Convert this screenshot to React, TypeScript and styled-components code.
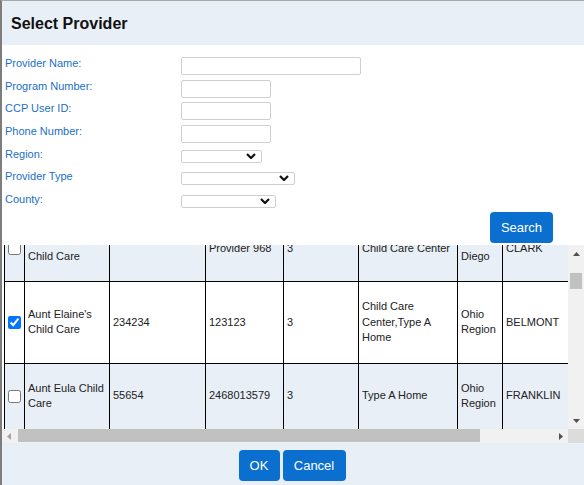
import React, { useLayoutEffect, useRef } from "react";
import styled, { createGlobalStyle } from "styled-components";

const GlobalStyle = createGlobalStyle`
  html, body {
    margin: 0;
    padding: 0;
    background: #fff;
  }
  body {
    font-family: "Liberation Sans", Arial, sans-serif;
  }
`;

const Dialog = styled.div`
  width: 584px;
  height: 485px;
  box-sizing: border-box;
  border-left: 2px solid #7d7d7d;
  border-top: 1px solid #a8a8a8;
  display: flex;
  flex-direction: column;
  overflow: hidden;
`;

const TitleBar = styled.div`
  height: 44px;
  flex: none;
  background: #e9eff6;
  display: flex;
  align-items: center;
  padding-left: 9px;
`;

const Title = styled.h1`
  margin: 0;
  font-size: 16px;
  font-weight: bold;
  color: #111;
  padding-top: 1px;
`;

const FormSection = styled.div`
  height: 200px;
  flex: none;
  box-sizing: border-box;
  padding: 12px 0 2px 3px;
  display: flex;
  flex-direction: column;
`;

const FormGrid = styled.div`
  display: grid;
  grid-template-columns: 176px 1fr;
  grid-template-rows: repeat(6, 22.67px) 19px;
`;

const Label = styled.label`
  font-size: 11px;
  line-height: 13px;
  color: #1c6fc6;
`;

const TextInput = styled.input<{ $w: number }>`
  width: ${(p) => p.$w}px;
  height: 18px;
  box-sizing: border-box;
  border: 1px solid #cfcfcf;
  border-radius: 2px;
  padding: 0 3px;
  font-size: 11px;
  font-family: inherit;
  outline: none;
`;

const SelectWrap = styled.span<{ $w: number }>`
  position: relative;
  display: block;
  width: ${(p) => p.$w}px;
  height: 13px;
  margin-top: 2px;
`;

const Select = styled.select`
  appearance: none;
  display: block;
  width: 100%;
  height: 100%;
  box-sizing: border-box;
  border: 1px solid #cfcfcf;
  border-radius: 2px;
  background: #fff;
  padding: 0;
  margin: 0;
  font-size: 10px;
  outline: none;
`;

const Chevron = styled.svg`
  position: absolute;
  right: 6px;
  top: 3px;
  pointer-events: none;
`;

const SearchRow = styled.div`
  display: flex;
  justify-content: flex-end;
  padding-right: 31px;
`;

const BlueButton = styled.button<{ $w: number }>`
  width: ${(p) => p.$w}px;
  height: 31px;
  border: none;
  border-radius: 4px;
  background: #0b6fcf;
  color: #fff;
  font-family: "Liberation Sans", Arial, sans-serif;
  font-size: 13px;
  padding: 0;
  cursor: pointer;
`;

/* table area: viewport plus hand drawn scrollbars */
const TableFrame = styled.div`
  flex: none;
  display: grid;
  grid-template-columns: 1fr 16px;
  grid-template-rows: 184px 14px;
`;

const Viewport = styled.div`
  overflow: hidden;
  background: #fff;
  padding-left: 2px;
`;

const VBar = styled.div`
  background: #f1f1f1;
  display: flex;
  flex-direction: column;
`;

const HBar = styled.div`
  background: #f1f1f1;
  display: flex;
`;

const BarButton = styled.div<{ $vertical?: boolean }>`
  flex: none;
  width: ${(p) => (p.$vertical ? "16px" : "14px")};
  height: ${(p) => (p.$vertical ? "17px" : "14px")};
  display: flex;
  align-items: center;
  justify-content: center;
`;

const Track = styled.div`
  flex: 1;
  display: flex;
`;

const VThumb = styled.div<{ $offset: number; $size: number }>`
  width: 12px;
  height: ${(p) => p.$size}px;
  margin: ${(p) => p.$offset}px 0 0 2px;
  background: #c1c1c1;
`;

const HThumb = styled.div<{ $offset: number; $size: number }>`
  width: ${(p) => p.$size}px;
  height: 13px;
  margin-left: ${(p) => p.$offset}px;
  background: #c1c1c1;
`;

const Corner = styled.div`
  background: #dcdcdc;
`;

const Table = styled.table`
  border-collapse: collapse;
  table-layout: fixed;
  width: 668px;
  font-size: 11px;
  line-height: 15.5px;
  color: #222;
`;

const HeadCell = styled.th`
  border: 1px solid #000;
  padding: 6px 3px;
  text-align: left;
  font-weight: bold;
  background: #dfe7f1;
  vertical-align: middle;
`;

const Row = styled.tr<{ $striped: boolean }>`
  background: ${(p) => (p.$striped ? "#e9eff7" : "#fff")};
`;

const Cell = styled.td`
  border: 1px solid #000;
  padding: 17px 3px;
  vertical-align: middle;
  word-wrap: break-word;
`;

const CheckCell = styled(Cell)`
  padding: 0 0 0 3px;
`;

const Check = styled.input`
  width: 13px;
  height: 13px;
  margin: 0;
  display: block;
`;

const Footer = styled.div`
  flex: 1;
  background: #e9eff6;
  display: flex;
  justify-content: center;
  align-items: flex-start;
  gap: 3px;
  padding: 7px 2px 0 0;
`;

type Provider = {
  name: string;
  program: string;
  user: string;
  rating: string;
  type: string;
  region: string;
  county: string;
  phone: string;
  checked?: boolean;
  anchor?: boolean;
};

const providers: Provider[] = [
  { name: "A Child's Place", program: "100245", user: "Provider 112", rating: "2", type: "Child Care Center", region: "Ohio Region", county: "ADAMS", phone: "6145550101" },
  { name: "ABC Learning Center", program: "100871", user: "Provider 540", rating: "4", type: "Type B Home", region: "Ohio Region", county: "ALLEN", phone: "6145550188" },
  { name: "Aunt Bettie's Child Care", program: "", user: "Provider 968", rating: "3", type: "Child Care Center", region: "San Diego", county: "CLARK", phone: "9375550142" },
  { name: "Aunt Elaine's Child Care", program: "234234", user: "123123", rating: "3", type: "Child Care Center,Type A Home", region: "Ohio Region", county: "BELMONT", phone: "7405550123", checked: true, anchor: true },
  { name: "Aunt Eula Child Care", program: "55654", user: "2468013579", rating: "3", type: "Type A Home", region: "Ohio Region", county: "FRANKLIN", phone: "6145550177" },
  { name: "Bright Beginnings", program: "301122", user: "Provider 204", rating: "5", type: "Child Care Center", region: "Ohio Region", county: "BUTLER", phone: "5135550190" },
  { name: "Busy Bees Day Care", program: "301877", user: "Provider 311", rating: "2", type: "Type B Home", region: "Ohio Region", county: "CLERMONT", phone: "5135550111" },
  { name: "Caring Hearts Child Care", program: "302440", user: "Provider 417", rating: "3", type: "Type A Home", region: "Ohio Region", county: "CUYAHOGA", phone: "2165550136" },
  { name: "Children's Corner", program: "303016", user: "Provider 529", rating: "4", type: "Child Care Center", region: "Ohio Region", county: "DELAWARE", phone: "7405550165" },
  { name: "Cozy Kids Learning", program: "303558", user: "Provider 630", rating: "1", type: "Type B Home", region: "Ohio Region", county: "ERIE", phone: "4195550148" },
  { name: "Discovery Child Care", program: "304102", user: "Provider 741", rating: "3", type: "Child Care Center", region: "Ohio Region", county: "FAIRFIELD", phone: "7405550109" },
  { name: "First Steps Academy", program: "304719", user: "Provider 852", rating: "5", type: "Child Care Center", region: "Ohio Region", county: "GREENE", phone: "9375550155" },
  { name: "Giggles Day Care", program: "305233", user: "Provider 963", rating: "2", type: "Type A Home", region: "Ohio Region", county: "HAMILTON", phone: "5135550172" },
  { name: "Happy Days Child Care", program: "305880", user: "Provider 174", rating: "3", type: "Child Care Center", region: "Ohio Region", county: "LAKE", phone: "4405550127" },
  { name: "Kiddie Kingdom", program: "306411", user: "Provider 285", rating: "4", type: "Type B Home", region: "Ohio Region", county: "LICKING", phone: "7405550193" },
  { name: "Little Acorns Child Care", program: "306990", user: "Provider 396", rating: "3", type: "Child Care Center", region: "Ohio Region", county: "LORAIN", phone: "4405550114" },
  { name: "Little Lambs Learning", program: "307524", user: "Provider 407", rating: "2", type: "Type A Home", region: "Ohio Region", county: "LUCAS", phone: "4195550160" },
  { name: "Rainbow Kids Care", program: "308163", user: "Provider 518", rating: "5", type: "Child Care Center", region: "Ohio Region", county: "MONTGOMERY", phone: "9375550181" },
  { name: "Sunshine Child Care", program: "308702", user: "Provider 629", rating: "3", type: "Type B Home", region: "Ohio Region", county: "PORTAGE", phone: "3305550139" },
  { name: "Tiny Tots Center", program: "309345", user: "Provider 730", rating: "4", type: "Child Care Center", region: "Ohio Region", county: "STARK", phone: "3305550152" },
  { name: "Wee Care Child Care", program: "309876", user: "Provider 841", rating: "3", type: "Type A Home", region: "Ohio Region", county: "SUMMIT", phone: "3305550118" },
  { name: "Wonder Years Learning", program: "310419", user: "Provider 952", rating: "2", type: "Child Care Center", region: "Ohio Region", county: "WARREN", phone: "5135550146" },
  { name: "Young Explorers Care", program: "311058", user: "Provider 163", rating: "4", type: "Type B Home", region: "Ohio Region", county: "WOOD", phone: "4195550184" },
];

const colWidths = [20, 85, 96, 78, 75, 99, 45, 80, 90];
const headers = ["", "Provider Name", "Program Number", "CCP User ID", "Rating", "Provider Type", "Region", "County", "Phone Number"];

const ChevronIcon = () => (
  <Chevron width="10" height="6" viewBox="0 0 10 6">
    <path d="M1 1 L5 5 L9 1" fill="none" stroke="#111" strokeWidth="2.2" />
  </Chevron>
);

const Dropdown = ({ width }: { width: number }) => (
  <SelectWrap $w={width}>
    <Select defaultValue="">
      <option value=""></option>
    </Select>
    <ChevronIcon />
  </SelectWrap>
);

type Dir = "up" | "down" | "left" | "right";
const arrowPoints: Record<Dir, string> = {
  up: "0,4 3.5,0 7,4",
  down: "0,0 7,0 3.5,4",
  left: "4,0 4,7 0,3.5",
  right: "0,0 4,3.5 0,7",
};

const Arrow = ({ dir, color = "#505050" }: { dir: Dir; color?: string }) => {
  const flat = dir === "up" || dir === "down";
  return (
    <svg width={flat ? 7 : 4} height={flat ? 4 : 7} viewBox={flat ? "0 0 7 4" : "0 0 4 7"}>
      <polygon points={arrowPoints[dir]} fill={color} />
    </svg>
  );
};

export default function App() {
  const scrollRef = useRef<HTMLDivElement>(null);

  useLayoutEffect(() => {
    const box = scrollRef.current;
    if (!box) return;
    const anchor = box.querySelector("[data-anchor]") as HTMLElement | null;
    if (!anchor) return;
    const top = anchor.getBoundingClientRect().top - box.getBoundingClientRect().top;
    box.scrollTop = top - 37;
  }, []);

  return (
    <>
      <GlobalStyle />
      <Dialog>
        <TitleBar>
          <Title>Select Provider</Title>
        </TitleBar>
        <FormSection>
          <FormGrid>
            <Label>Provider Name:</Label>
            <TextInput $w={180} />
            <Label>Program Number:</Label>
            <TextInput $w={90} />
            <Label>CCP User ID:</Label>
            <TextInput $w={90} />
            <Label>Phone Number:</Label>
            <TextInput $w={90} />
            <Label>Region:</Label>
            <Dropdown width={81} />
            <Label>Provider Type</Label>
            <Dropdown width={114} />
            <Label>County:</Label>
            <Dropdown width={95} />
          </FormGrid>
          <SearchRow>
            <BlueButton $w={63}>Search</BlueButton>
          </SearchRow>
        </FormSection>
        <TableFrame>
          <Viewport ref={scrollRef}>
            <Table>
              <colgroup>
                {colWidths.map((w, i) => (
                  <col key={i} style={{ width: w }} />
                ))}
              </colgroup>
              <thead>
                <tr>
                  {headers.map((h, i) => (
                    <HeadCell key={i}>{h}</HeadCell>
                  ))}
                </tr>
              </thead>
              <tbody>
                {providers.map((p, i) => (
                  <Row key={p.name} $striped={i % 2 === 0} data-anchor={p.anchor ? "" : undefined}>
                    <CheckCell>
                      <Check type="checkbox" defaultChecked={!!p.checked} />
                    </CheckCell>
                    <Cell>{p.name}</Cell>
                    <Cell>{p.program}</Cell>
                    <Cell>{p.user}</Cell>
                    <Cell>{p.rating}</Cell>
                    <Cell>{p.type}</Cell>
                    <Cell>{p.region}</Cell>
                    <Cell>{p.county}</Cell>
                    <Cell>{p.phone}</Cell>
                  </Row>
                ))}
              </tbody>
            </Table>
          </Viewport>
          <VBar>
            <BarButton $vertical>
              <Arrow dir="up" />
            </BarButton>
            <Track>
              <VThumb $offset={11} $size={16} />
            </Track>
            <BarButton $vertical>
              <Arrow dir="down" />
            </BarButton>
          </VBar>
          <HBar>
            <BarButton>
              <Arrow dir="left" color="#a3a3a3" />
            </BarButton>
            <Track>
              <HThumb $offset={2} $size={462} />
            </Track>
            <BarButton>
              <Arrow dir="right" />
            </BarButton>
          </HBar>
          <Corner />
        </TableFrame>
        <Footer>
          <BlueButton $w={41}>OK</BlueButton>
          <BlueButton $w={63}>Cancel</BlueButton>
        </Footer>
      </Dialog>
    </>
  );
}
